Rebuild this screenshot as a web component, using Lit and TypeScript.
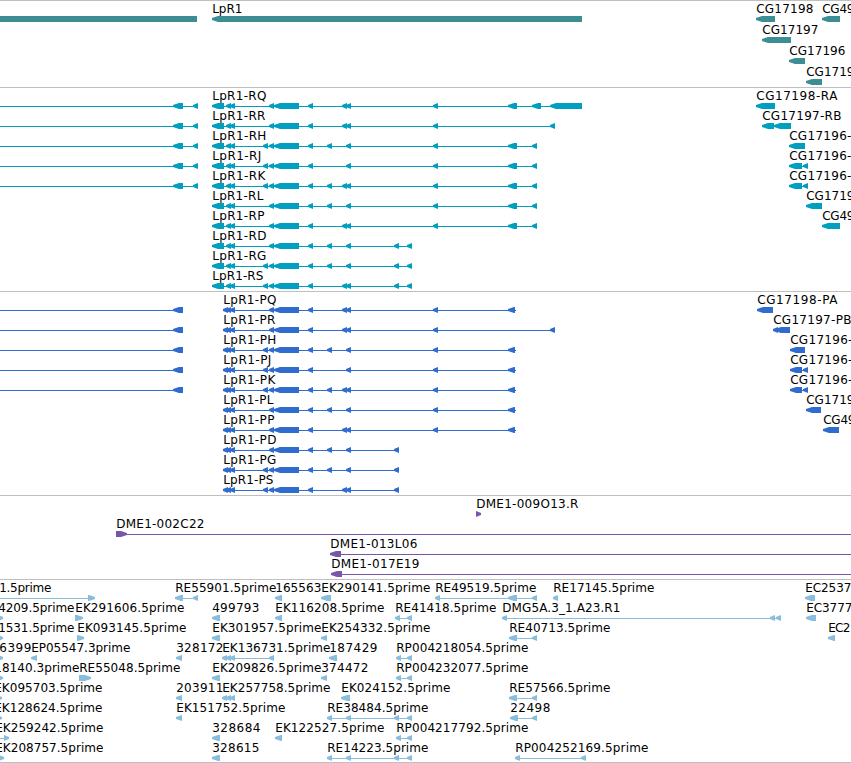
import {LitElement, css, html, svg, nothing} from 'lit'
import {customElement, property} from 'lit/decorators.js'

// start and end x of something drawn on a track
type Span = [number, number]

interface Feature {
  row: number
  blocks: Span[]
  label?: string
  labelStart?: number
  labelEnd?: number
  line?: Span
  forward?: boolean
}

interface Track {
  color: string
  height: number
  pitch: number
  features: Feature[]
}

const TIP = 5
const BAR = 6

const tips = (...starts: number[]): Span[] => starts.map(s => [s, s + TIP])

const feature = (
  row: number,
  label: string,
  labelStart: number,
  labelEnd: number,
  blocks: Span[],
  extra: Partial<Feature> = {}
): Feature => ({row, label, labelStart, labelEnd, blocks, ...extra})

// Exons shared by the LpR1 isoforms, keyed by the last letter of the isoform
const tail: Span[] = [[508, 517], [532, 537]]
const cdsTail: Span[] = [[508, 515]]
const isoforms: [string, number, number[], Span[], Span[]][] = [
  ['Q', 266, [269, 308, 342, 346, 433], [[508, 517], [532, 541], [550, 582]], cdsTail],
  ['R', 265, [269, 308, 342, 346, 433], [[550, 555]], [[550, 555]]],
  ['H', 266, [263, 269, 308, 327, 346, 433], tail, cdsTail],
  ['J', 261, [263, 269, 308, 346, 433], tail, cdsTail],
  ['K', 265, [263, 269, 308, 327, 342, 346, 433], tail, cdsTail],
  ['L', 263, [269, 308, 327, 346, 433], tail, cdsTail],
  ['P', 264, [269, 308, 342, 346, 433], tail, cdsTail],
  ['D', 266, [269, 308, 327, 346, 394], [[407, 412]], []],
  ['G', 266, [263, 269, 308, 327, 346, 394], [[407, 412]], []],
  ['S', 263, [263, 269, 308, 342, 346, 394], [[407, 412]], []],
]

const transcripts: Feature[] = isoforms.map(([id, end, exons, last], row) =>
  feature(row, `LpR1-R${id}`, 212, end, [[212, 224], ...tips(226, 230, ...exons), [274, 299], ...last]))

const proteins: Feature[] = isoforms.map(([id, end, exons, , last], row) =>
  feature(row, `LpR1-P${id}`, 223, end + 10, [...tips(223, 226, 230, ...exons), [274, 299], ...last],
    last === cdsTail ? {line: [223, 516]} : {}))

const rows = [0, 1, 2, 3, 4]

const tracks: Track[] = [
  {
    color: '#3d8e94',
    height: 87,
    pitch: 21,
    features: [
      {row: 0, blocks: [[-20, 197]]},
      feature(0, 'LpR1', 212, 242, [[212, 582]]),
      feature(0, 'CG17198', 756, 813, [[756, 775]]),
      feature(0, 'CG49', 822, 854, [[822, 840]]),
      feature(1, 'CG17197', 762, 818, [[762, 791]]),
      feature(2, 'CG17196', 789, 845, [[789, 805]]),
      feature(3, 'CG1719', 806, 854, [[806, 822]]),
    ],
  },
  {
    color: '#009ebf',
    height: 204,
    pitch: 20,
    features: [
      ...rows.map(row => ({row, blocks: [[173, 183], [193, 198]] as Span[], line: [0, 198] as Span})),
      ...transcripts,
      feature(0, 'CG17198-RA', 756, 837, [[756, 775]]),
      feature(1, 'CG17197-RB', 762, 841, [[762, 774], [774, 791]]),
      feature(2, 'CG17196-', 789, 851, [[789, 805]]),
      feature(3, 'CG17196-', 789, 851, [[789, 802], [803, 808]]),
      feature(4, 'CG17196-', 789, 851, [[789, 802], [803, 808]]),
      feature(5, 'CG1719', 806, 854, [[806, 822]]),
      feature(6, 'CG49', 822, 854, [[822, 840]]),
    ],
  },
  {
    color: '#306ccd',
    height: 204,
    pitch: 20,
    features: [
      ...rows.map(row => ({row, blocks: [[173, 183]] as Span[], line: [0, 183] as Span})),
      ...proteins,
      feature(0, 'CG17198-PA', 757, 837, [[757, 773]]),
      feature(1, 'CG17197-PB', 773, 851, [[773, 778], [775, 790]]),
      feature(2, 'CG17196-', 790, 852, [[790, 805]]),
      feature(3, 'CG17196-', 790, 852, [[790, 802], [803, 808]]),
      feature(4, 'CG17196-', 790, 852, [[790, 802], [803, 808]]),
      feature(5, 'CG1719', 806, 854, [[806, 821]]),
      feature(6, 'CG49', 823, 855, [[823, 839]]),
    ],
  },
  {
    color: '#7757a9',
    height: 84,
    pitch: 20,
    features: [
      feature(0, 'DME1-009O13.R', 476, 578, [[476, 481]], {forward: true}),
      feature(1, 'DME1-002C22', 116, 204, [[116, 127]], {forward: true, line: [116, 851]}),
      feature(2, 'DME1-013L06', 330, 417, [[330, 341]], {line: [331, 851]}),
      feature(3, 'DME1-017E19', 331, 419, [[331, 342]], {line: [332, 851]}),
    ],
  },
  {
    color: '#88bddd',
    height: 183,
    pitch: 20,
    features: [
      feature(0, '1.5prime', -1, 51, [[88, 95]], {forward: true, line: [0, 90]}),
      feature(0, 'RE55901.5prime', 175, 276, [[175, 183], [193, 198]]),
      feature(0, '165563', 275, 321, [[275, 282]]),
      feature(0, 'EK290141.5prime', 321, 430, [[321, 331]]),
      feature(0, 'RE49519.5prime', 435, 536, [[435, 440], [508, 517], [532, 537]]),
      feature(0, 'RE17145.5prime', 553, 654, [[553, 558]]),
      feature(0, 'EC2537', 805, 851, [[805, 815]]),

      feature(1, '4209.5prime', -2, 74, [[-2, 3]], {forward: true}),
      feature(1, 'EK291606.5prime', 75, 184, [[75, 83]], {forward: true}),
      feature(1, '499793', 212, 259, [[212, 220]]),
      feature(1, 'EK116208.5prime', 275, 384, [[275, 282]]),
      feature(1, 'RE41418.5prime', 395, 496, tips(395, 407)),
      feature(1, 'DMG5A.3_1.A23.R1', 502, 620, tips(502, 770, 776)),
      feature(1, 'EC3777', 806, 852, [[806, 816]]),

      feature(2, '1531.5prime', -2, 74, [[-2, 3]], {forward: true}),
      feature(2, 'EK093145.5prime', 77, 186, [[77, 84]], {forward: true}),
      feature(2, 'EK301957.5prime', 212, 321, [[212, 220]]),
      feature(2, 'EK254332.5prime', 321, 430, [[321, 327]]),
      feature(2, 'RE40713.5prime', 509, 610, [[509, 517], [532, 537]]),
      feature(2, 'EC2', 828, 850, [[828, 835]]),

      feature(3, '6399', -1, 31, [[-2, 3]], {forward: true}),
      feature(3, 'EP05547.3prime', 31, 130, [[31, 37]]),
      feature(3, '328172', 176, 223, [[176, 182]]),
      feature(3, 'EK136731.5prime', 222, 330, tips(222, 226, 230, 269)),
      feature(3, '187429', 329, 377, [[329, 337]]),
      feature(3, 'RP004218054.5prime', 396, 528, tips(396, 407)),

      feature(4, '18140.3prime', -6, 79, [[-2, 3]], {forward: true}),
      feature(4, 'RE55048.5prime', 79, 180, [[79, 91]], {forward: true}),
      feature(4, 'EK209826.5prime', 212, 321, [[212, 220]]),
      feature(4, '374472', 321, 368, [[321, 327]]),
      feature(4, 'RP004232077.5prime', 396, 528, tips(396, 407)),

      feature(5, 'EK095703.5prime', -6, 102, [[-3, 2]], {forward: true}),
      feature(5, '203911', 176, 223, [[176, 182]]),
      feature(5, 'EK257758.5prime', 222, 330, tips(222, 226, 230)),
      feature(5, 'EK024152.5prime', 341, 450, [[341, 350]]),
      feature(5, 'RE57566.5prime', 509, 610, [[509, 517], [532, 537]]),

      feature(6, 'EK128624.5prime', -6, 102, [[-3, 2]], {forward: true}),
      feature(6, 'EK151752.5prime', 176, 285, [[176, 182]]),
      feature(6, 'RE38484.5prime', 327, 428, tips(327, 346, 394, 407)),
      feature(6, '22498', 510, 550, [[510, 518], [532, 537]]),

      feature(7, 'EK259242.5prime', -5, 103, [[4, 9]], {forward: true, line: [0, 6]}),
      feature(7, '328684', 212, 260, [[212, 220]]),
      feature(7, 'EK122527.5prime', 275, 384, [[275, 282]]),
      feature(7, 'RP004217792.5prime', 396, 528, tips(396, 407)),

      feature(8, 'EK208757.5prime', -5, 103, [[-1, 4]], {forward: true}),
      feature(8, '328615', 212, 259, [[212, 220]]),
      feature(8, 'RE14223.5prime', 327, 428, tips(327, 346, 394, 407)),
      feature(8, 'RP004252169.5prime', 515, 648, tips(515, 581)),
    ],
  },
]

@customElement('genome-track')
export class GenomeTrack extends LitElement {
  static styles = css`
    :host {
      display: block;
      box-sizing: border-box;
      border-top: 1px solid #bfbfbf;
    }

    .canvas {
      display: block;
      width: 100%;
      overflow: hidden;
    }

    .label {
      font-family: "DejaVu Sans", sans-serif;
      font-size: 12px;
      fill: #000;
    }
  `

  @property({attribute: false}) track!: Track

  // a block with a blunt point on the end that its strand runs to
  block([start, end]: Span, top: number, forward = false) {
    const head = Math.min(end - start, 6)
    const tip = forward ? end : start
    const back = forward ? start : end
    const neck = forward ? end - head : start + head
    const points = [
      [back, top],
      [neck, top],
      [tip, top + 2],
      [tip, top + 4],
      [neck, top + BAR],
      [back, top + BAR],
    ]
    return svg`<polygon points=${points.join(' ')}></polygon>`
  }

  feature(f: Feature) {
    const y = f.row * this.track.pitch
    const start = Math.min(...f.blocks.map(b => b[0]))
    const end = Math.max(...f.blocks.map(b => b[1]))
    const [from, to] = f.line ?? [start + 2, end - 2]
    const hasLine = f.line || f.blocks.length > 1
    return svg`
      ${hasLine ? svg`<rect x=${from} y=${y + 18} width=${to - from} height="1"></rect>` : nothing}
      ${f.blocks.map(b => this.block(b, y + 15, f.forward))}
      ${f.label ? svg`
        <text class="label" x=${f.labelStart! + 0.2} y=${y + 12}
          textLength=${f.labelEnd! - f.labelStart! + 0.2}>${f.label}</text>
      ` : nothing}
    `
  }

  render() {
    const {color, height, features} = this.track
    return html`
      <svg class="canvas" height=${height - 1} fill=${color}>
        ${features.map(f => this.feature(f))}
      </svg>
    `
  }
}

@customElement('app-root')
export class AppRoot extends LitElement {
  static styles = css`
    :host {
      display: flex;
      flex-direction: column;
      box-sizing: border-box;
      height: 763px;
      overflow: hidden;
      background: #fff;
      border-bottom: 1px solid #bfbfbf;
    }
  `

  render() {
    return tracks.map(track => html`<genome-track .track=${track}></genome-track>`)
  }
}
